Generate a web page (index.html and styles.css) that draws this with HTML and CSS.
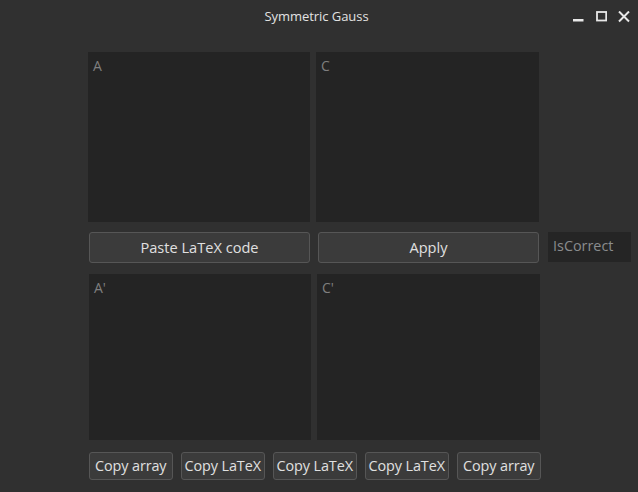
FILE: index.html
```html
<!DOCTYPE html>
<html>
<head>
<meta charset="utf-8">
<link rel="stylesheet" href="styles.css">
</head>
<body>
<div class="window">
  <header class="titlebar">
    <span class="title">Symmetric Gauss</span>
    <div class="controls">
      <svg class="ctl" width="11" height="12" viewBox="0 0 11 12"><rect x="0" y="8" width="10.5" height="2.5" fill="#e8e8e8"/></svg>
      <svg class="ctl" width="11" height="12" viewBox="0 0 11 12"><rect x="1" y="1" width="9.2" height="8.5" fill="none" stroke="#e8e8e8" stroke-width="1.8"/></svg>
      <svg class="ctl" width="12" height="12" viewBox="0 0 12 12"><path d="M1 0.5 L11 10.5 M11 0.5 L1 10.5" stroke="#e8e8e8" stroke-width="2"/></svg>
    </div>
  </header>
  <main class="content">
    <div class="grid">
      <div class="box top">A</div>
      <div class="box top">C</div>
      <div></div>
      <button class="btn wide paste">Paste LaTeX code</button>
      <button class="btn wide apply">Apply</button>
      <div class="status">IsCorrect</div>
      <div class="box bottom">A'</div>
      <div class="box bottom">C'</div>
      <div></div>
    </div>
    <div class="copyrow">
      <button class="btn small">Copy array</button>
      <button class="btn small">Copy LaTeX</button>
      <button class="btn small">Copy LaTeX</button>
      <button class="btn small">Copy LaTeX</button>
      <button class="btn small">Copy array</button>
    </div>
  </main>
</div>
</body>
</html>
```

FILE: styles.css
```css
html, body {
  margin: 0;
  padding: 0;
  background: #303030;
}
body {
  width: 638px;
  height: 492px;
  overflow: hidden;
  font-family: "Open Sans", "DejaVu Sans", sans-serif;
  color: #dedede;
}
.window {
  display: flex;
  flex-direction: column;
}
.titlebar {
  position: relative;
  height: 52px;
  display: flex;
  justify-content: center;
}
.title {
  margin-top: 6px;
  margin-right: 5px;
  font-size: 13px;
  line-height: 20px;
  color: #e2e2e2;
  letter-spacing: -0.05px;
}
.controls {
  position: absolute;
  top: 11px;
  right: 8px;
  display: flex;
  gap: 11.5px;
}
.ctl {
  display: block;
}
.content {
  padding-left: 88px;
}
.grid {
  display: grid;
  grid-template-columns: 222px 223px 86px;
  grid-template-rows: 170px 31px 167px;
  column-gap: 6px;
  row-gap: 10px;
}
.box {
  background: #242424;
  color: #7f7f7f;
  font-size: 14px;
  line-height: 16px;
  padding: 6px 6px 6px 5px;
  box-sizing: border-box;
}
.box.bottom {
  margin-top: 1px;
  margin-left: 1px;
  margin-right: -1px;
}
.btn {
  font-family: "Open Sans", "DejaVu Sans", sans-serif;
  background: #3b3b3b;
  border: 1px solid #565656;
  border-radius: 3px;
  color: #e0e0e0;
  padding: 0;
  box-sizing: border-box;
  cursor: default;
}
.wide {
  font-size: 14.6px;
  height: 31px;
  line-height: 29px;
}
.paste {
  margin-left: 1px;
}
.apply {
  margin-left: 2px;
}
.status {
  margin-left: 3px;
  background: #252525;
  color: #8a8c8e;
  font-size: 14.4px;
  line-height: 27px;
  padding: 0 5px;
  height: 30px;
  box-sizing: border-box;
}
.copyrow {
  display: flex;
  gap: 8.5px;
  margin-top: 12px;
  margin-left: 1px;
}
.small {
  width: 83.5px;
  height: 28px;
  font-size: 14.4px;
  line-height: 26px;
  white-space: nowrap;
  letter-spacing: -0.1px;
}
```
